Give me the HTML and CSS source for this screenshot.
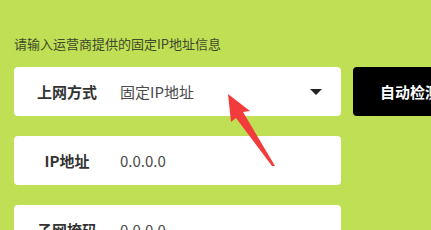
FILE: index.html
```html
<!DOCTYPE html>
<html lang="zh-CN">
<head>
    <meta charset="UTF-8">
    <title>固定IP地址</title>
    <link rel="stylesheet" href="styles.css">
</head>
<body>
<div class="seite">
    <div class="hinweis">请输入运营商提供的固定IP地址信息</div>

    <div class="zeile">
        <div class="feld">
            <span class="name">上网方式</span>
            <span class="wert">固定IP地址</span>
            <span class="pfeil"></span>
        </div>
        <div class="knopf">自动检测</div>
    </div>

    <div class="zeile">
        <div class="feld">
            <span class="name">IP地址</span>
            <span class="wert">0.0.0.0</span>
        </div>
    </div>

    <div class="zeile">
        <div class="feld">
            <span class="name">子网掩码</span>
            <span class="wert">0.0.0.0</span>
        </div>
    </div>
</div>

<svg class="markierung" width="431" height="230" viewBox="0 0 431 230">
    <polygon points="228,94 250,111 243,112 275,166 272,166 236,118 231,122" fill="#f23b3b"/>
</svg>
</body>
</html>
```

FILE: styles.css
```css
body {
    margin: 0;
    background-color: #bfdf55;
    font-family: "Noto Sans CJK SC", "Noto Sans", sans-serif;
    overflow: hidden;
}

.seite {
    padding: 35px 0 0 14px;
    display: flex;
    flex-direction: column;
    gap: 20px;
}

.hinweis {
    font-size: 13px;
    line-height: 18px;
    color: #3e4a2c;
    margin-bottom: -6px;
}

.zeile {
    display: flex;
    gap: 12px;
}

.feld {
    width: 327px;
    height: 49px;
    background-color: #fff;
    border-radius: 4px;
    display: flex;
    align-items: center;
    flex-shrink: 0;
}

.name {
    width: 106px;
    text-align: center;
    font-size: 15px;
    font-weight: bold;
    color: #333;
}

.wert {
    flex: 1;
    font-size: 15px;
    color: #4a4a4a;
}

.pfeil {
    width: 0;
    height: 0;
    border-left: 6px solid transparent;
    border-right: 6px solid transparent;
    border-top: 6px solid #222;
    margin-right: 19px;
}

.knopf {
    height: 49px;
    padding: 0 27px;
    background-color: #000;
    color: #fff;
    border-radius: 4px;
    font-size: 15px;
    font-weight: bold;
    display: flex;
    align-items: center;
    white-space: nowrap;
}

.markierung {
    position: absolute;
    left: 0;
    top: 0;
}
```
